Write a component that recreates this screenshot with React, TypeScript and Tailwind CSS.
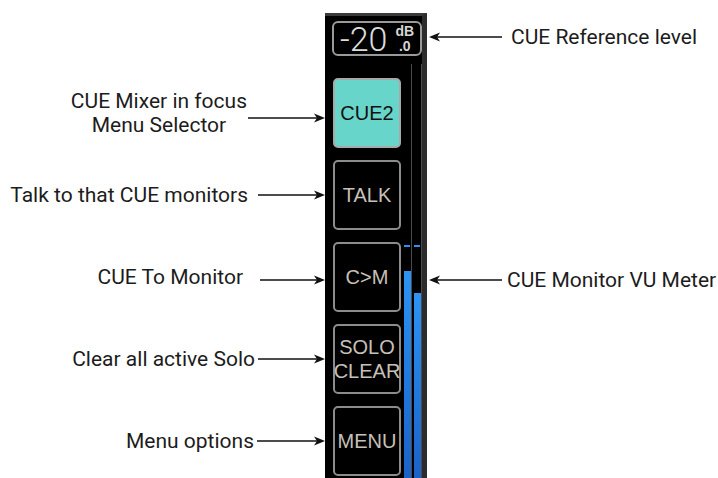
import React from 'react';

const LeftArrow: React.FC<{ width: number }> = ({ width }) => (
  <svg width={width} height={12} viewBox={`0 0 ${width} 12`} className="shrink-0">
    <line x1={6} y1={6} x2={width} y2={6} stroke="#111" strokeWidth={1.3} />
    <path d="M0 6 L11 1.5 L8 6 L11 10.5 Z" fill="#111" />
  </svg>
);

const RightArrow: React.FC<{ width: number }> = ({ width }) => (
  <svg width={width} height={12} viewBox={`0 0 ${width} 12`} className="shrink-0">
    <line x1={0} y1={6} x2={width - 6} y2={6} stroke="#111" strokeWidth={1.3} />
    <path d={`M${width} 6 L${width - 11} 1.5 L${width - 8} 6 L${width - 11} 10.5 Z`} fill="#111" />
  </svg>
);

const labels = [
  { lines: ['CUE Mixer in focus', 'Menu Selector'], arrow: 77, gap: 1, shift: 'mt-[10px]' },
  { lines: ['Talk to that CUE monitors'], arrow: 67, gap: 10, shift: '' },
  { lines: ['CUE To Monitor'], arrow: 65, gap: 17, shift: 'mt-[6px]' },
  { lines: ['Clear all active Solo'], arrow: 67, gap: 3, shift: '' },
  { lines: ['Menu options'], arrow: 68, gap: 3, shift: '' },
];

const buttons = [
  { lines: ['CUE2'], active: true },
  { lines: ['TALK'] },
  { lines: ['C>M'] },
  { lines: ['SOLO', 'CLEAR'] },
  { lines: ['MENU'] },
];

const Meter: React.FC<{ top: number }> = ({ top }) => (
  <div className="w-[8px] h-full border-r border-[#4a4a4a] flex flex-col">
    <div className="h-[181px] shrink-0" />
    <div className="h-[2px] shrink-0 bg-[#2f8ff0] mr-[1px]" />
    <div className="shrink-0" style={{ height: top - 245 - 2 }} />
    <div className="flex-1 bg-gradient-to-b from-[#2d93f5] to-[#1a62c8]" />
  </div>
);

export default function App() {
  return (
    <div
      className="w-[718px] h-[478px] bg-white flex overflow-hidden text-[#1c1c1c]"
      style={{ fontFamily: 'Roboto, "Noto Sans", sans-serif' }}
    >
      {/* left annotations */}
      <div className="w-[325px] shrink-0 pt-[78px] flex flex-col gap-[12px]">
        {labels.map((l, i) => (
          <div key={i} className="h-[70px] flex items-center justify-end">
            <div className="text-center text-[21px] leading-[24px]">
              {l.lines.map((t) => (
                <div key={t}>{t}</div>
              ))}
            </div>
            <div className={l.shift} style={{ marginLeft: l.gap }}>
              <RightArrow width={l.arrow} />
            </div>
          </div>
        ))}
      </div>

      {/* device panel */}
      <div className="mt-[13px] w-[102px] shrink-0 bg-black border-t-[3px] border-[#3a3a3a] border-r-[5px] border-r-[#2c2c2c] flex flex-col">
        <div className="ml-[7px] mt-[5px] w-[90px] h-[35px] border-2 border-[#9a9a9a] rounded-[6px] flex items-center pl-[6px] text-[#dcdcdc]">
          <span className="text-[34px] font-light leading-none">-20</span>
          <div className="ml-[8px] flex flex-col items-center font-bold text-[14px] leading-[15px] text-[#d6d6d6]" style={{ fontFamily: '"Liberation Sans", sans-serif' }}>
            <span>dB</span>
            <span>.0</span>
          </div>
        </div>
        <div className="flex-1 flex pl-[8px] min-h-0">
          <div className="w-[68px] pt-[22px] flex flex-col gap-[12px]" style={{ fontFamily: '"Liberation Sans", Arial, sans-serif' }}>
            {buttons.map((b, i) => (
              <div
                key={i}
                className={`h-[70px] shrink-0 rounded-[5px] border-2 flex flex-col items-center justify-center text-[20px] leading-[24px] ${
                  b.active ? 'bg-[#67d5c9] border-[#a8a8a8] text-[#111]' : 'border-[#8c8c8c] text-[#c6c1b9]'
                }`}
              >
                {b.lines.map((t) => (
                  <span key={t}>{t}</span>
                ))}
              </div>
            ))}
          </div>
          <div className="ml-[3px] mt-[8px] flex gap-[2px] h-[414px]">
            <Meter top={271} />
            <Meter top={293} />
          </div>
        </div>
      </div>

      {/* right annotations */}
      <div className="flex-1 pl-[2px] pt-[25px] flex flex-col text-[21px] leading-[24px]">
        <div className="h-[24px] flex items-center">
          <LeftArrow width={73} />
          <span className="ml-[9px]">CUE Reference level</span>
        </div>
        <div className="mt-[219px] h-[24px] flex items-center">
          <LeftArrow width={73} />
          <span className="ml-[5px]">CUE Monitor VU Meter</span>
        </div>
      </div>
    </div>
  );
}
